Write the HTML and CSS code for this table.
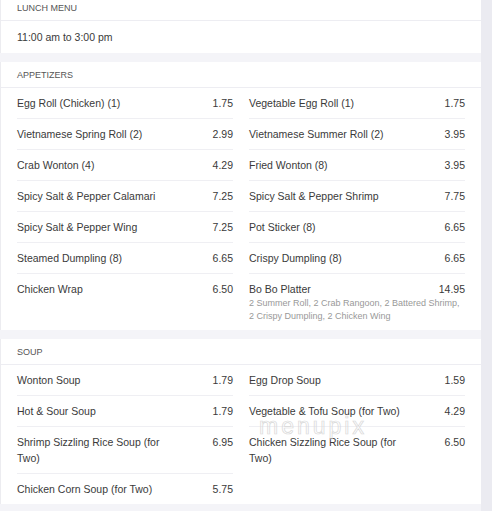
FILE: index.html
```html
<!DOCTYPE html>
<html>
<head>
<meta charset="utf-8">
<link rel="stylesheet" href="styles.css">
</head>
<body>
<div class="page">
  <main class="menu">
    <section class="card first">
      <h2 class="card-title">LUNCH MENU</h2>
      <div class="note">11:00 am to 3:00 pm</div>
    </section>

    <section class="card">
      <h2 class="card-title">APPETIZERS</h2>
      <div class="cols">
        <ul class="list">
          <li class="item"><span class="name">Egg Roll (Chicken) (1)</span><span class="price">1.75</span></li>
          <li class="item"><span class="name">Vietnamese Spring Roll (2)</span><span class="price">2.99</span></li>
          <li class="item"><span class="name">Crab Wonton (4)</span><span class="price">4.29</span></li>
          <li class="item"><span class="name">Spicy Salt &amp; Pepper Calamari</span><span class="price">7.25</span></li>
          <li class="item"><span class="name">Spicy Salt &amp; Pepper Wing</span><span class="price">7.25</span></li>
          <li class="item"><span class="name">Steamed Dumpling (8)</span><span class="price">6.65</span></li>
          <li class="item"><span class="name">Chicken Wrap</span><span class="price">6.50</span></li>
        </ul>
        <ul class="list">
          <li class="item"><span class="name">Vegetable Egg Roll (1)</span><span class="price">1.75</span></li>
          <li class="item"><span class="name">Vietnamese Summer Roll (2)</span><span class="price">3.95</span></li>
          <li class="item"><span class="name">Fried Wonton (8)</span><span class="price">3.95</span></li>
          <li class="item"><span class="name">Spicy Salt &amp; Pepper Shrimp</span><span class="price">7.75</span></li>
          <li class="item"><span class="name">Pot Sticker (8)</span><span class="price">6.65</span></li>
          <li class="item"><span class="name">Crispy Dumpling (8)</span><span class="price">6.65</span></li>
          <li class="item"><span class="name">Bo Bo Platter</span><span class="price">14.95</span><span class="desc">2 Summer Roll, 2 Crab Rangoon, 2 Battered Shrimp, 2 Crispy Dumpling, 2 Chicken Wing</span></li>
        </ul>
      </div>
    </section>

    <section class="card">
      <h2 class="card-title">SOUP</h2>
      <div class="cols">
        <ul class="list">
          <li class="item"><span class="name">Wonton Soup</span><span class="price">1.79</span></li>
          <li class="item"><span class="name">Hot &amp; Sour Soup</span><span class="price">1.79</span></li>
          <li class="item"><span class="name">Shrimp Sizzling Rice Soup (for Two)</span><span class="price">6.95</span></li>
          <li class="item"><span class="name">Chicken Corn Soup (for Two)</span><span class="price">5.75</span></li>
        </ul>
        <ul class="list">
          <li class="item"><span class="name">Egg Drop Soup</span><span class="price">1.59</span></li>
          <li class="item"><span class="name">Vegetable &amp; Tofu Soup (for Two)</span><span class="price">4.29</span></li>
          <li class="item"><span class="name">Chicken Sizzling Rice Soup (for Two)</span><span class="price">6.50</span></li>
        </ul>
      </div>
      <div class="watermark" aria-hidden="true">menupix</div>
    </section>
  </main>
  <div class="gutter"></div>
</div>
</body>
</html>
```

FILE: styles.css
```css
html, body {
  margin: 0;
  padding: 0;
  background: #f4f4f8;
  height: 100%;
  overflow: hidden;
}
body {
  font-family: "Liberation Sans", Arial, sans-serif;
  color: #3a3a3a;
  font-size: 10.5px;
}
.page {
  display: flex;
  min-height: 100%;
}
.menu {
  width: 481px;
  display: flex;
  flex-direction: column;
  gap: 9px;
  margin-top: -5px;
}
.gutter {
  flex: 1;
  background: #ebebf1;
}
.card {
  background: #fff;
  border-left: 1px solid #ececf0;
  position: relative;
}
.card-title {
  margin: 0;
  padding: 8px 16px 7px;
  line-height: 10px;
  font-size: 9px;
  font-weight: normal;
  color: #555;
  border-bottom: 1px solid #ededf2;
}
.note {
  padding: 8px 16px;
  line-height: 16px;
}
.cols {
  display: grid;
  grid-template-columns: 1fr 1fr;
  column-gap: 16px;
  padding: 0 16px;
}
.list {
  list-style: none;
  margin: 0;
  padding: 0;
}
.item {
  display: flex;
  flex-wrap: wrap;
  padding: 7px 0;
  line-height: 16px;
  border-bottom: 1px solid #efeff3;
}
.item:last-child {
  border-bottom: none;
}
.name {
  width: 75%;
}
.price {
  width: 25%;
  text-align: right;
}
.desc {
  width: 100%;
  font-size: 9px;
  line-height: 13px;
  color: #999;
}
.watermark {
  position: absolute;
  left: 258px;
  top: 81px;
  font-size: 23px;
  line-height: 12px;
  letter-spacing: 3px;
  color: transparent;
  -webkit-text-stroke: 0.7px #d8d8d8;
  pointer-events: none;
}
```
